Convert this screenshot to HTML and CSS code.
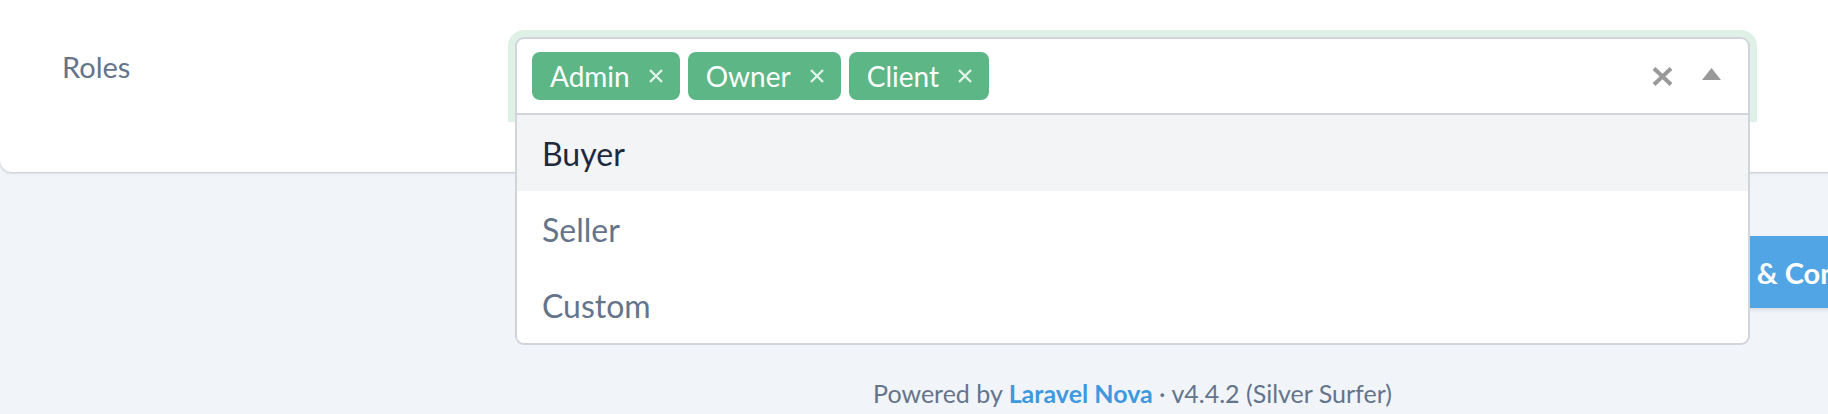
FILE: index.html
```html
<!DOCTYPE html>
<html lang="en">
<head>
<meta charset="utf-8">
<title>Roles</title>
<link rel="stylesheet" href="styles.css">
</head>
<body>
<div class="page">
  <div class="card">
    <div class="field-row">
      <div class="label-col"><span class="label">Roles</span></div>
      <div class="field-col">
        <div class="select">
          <div class="select-box">
            <div class="tags">
              <span class="tag">Admin<svg class="tag-x" viewBox="0 0 16 14"><path d="M2 1 L14 13 M14 1 L2 13"/></svg></span>
              <span class="tag">Owner<svg class="tag-x" viewBox="0 0 16 14"><path d="M2 1 L14 13 M14 1 L2 13"/></svg></span>
              <span class="tag">Client<svg class="tag-x" viewBox="0 0 16 14"><path d="M2 1 L14 13 M14 1 L2 13"/></svg></span>
            </div>
            <div class="controls">
              <svg class="clear" viewBox="0 0 21 19"><path d="M2 1.5 L19 17.5 M19 1.5 L2 17.5"/></svg>
              <svg class="caret" viewBox="0 0 19 12"><path d="M9.5 0 L19 12 L0 12 Z"/></svg>
            </div>
          </div>
          <ul class="menu">
            <li class="option is-active">Buyer</li>
            <li class="option">Seller</li>
            <li class="option">Custom</li>
          </ul>
        </div>
      </div>
    </div>
  </div>
  <div class="actions">
    <button class="btn" type="button">Update &amp; Continue Editing</button>
  </div>
  <footer class="footer">Powered by <a class="footer-link">Laravel Nova</a> · v4.4.2 (Silver Surfer)</footer>
</div>
</body>
</html>
```
FILE: styles.css
```css
html, body {
  margin: 0;
  padding: 0;
}
body {
  background: #f1f5f9;
  overflow: hidden;
  font-family: Lato, "Noto Sans", sans-serif;
  color: #64748b;
}
.page {
  width: 2265px;
}
.card {
  background: #ffffff;
  border-radius: 0 0 12px 12px;
  box-shadow: 0 1px 3px rgba(15, 23, 42, 0.14), 0 1px 2px rgba(15, 23, 42, 0.08);
  height: 172px;
  box-sizing: border-box;
  padding-top: 37px;
}
.field-row {
  display: flex;
}
.label-col {
  width: 453px;
  box-sizing: border-box;
  padding-left: 62px;
  padding-top: 13px;
  flex: none;
}
.label {
  font-size: 29px;
  line-height: 34px;
  color: #64748b;
}
.field-col {
  width: 1359px;
  box-sizing: border-box;
  padding: 0 62px;
  flex: none;
}
.select {
  position: relative;
}
.select-box {
  display: flex;
  align-items: center;
  justify-content: space-between;
  height: 78px;
  box-sizing: border-box;
  border: 2px solid #d1d5db;
  border-radius: 9px 9px 0 0;
  box-shadow: 0 0 0 7px #dff1e6;
  padding: 0 27px 0 15px;
  background: #fff;
}
.tags {
  display: flex;
  gap: 8px;
}
.tag {
  display: inline-flex;
  align-items: center;
  gap: 18px;
  height: 48px;
  padding: 0 16px 0 18px;
  background: #5db685;
  color: #ffffff;
  border-radius: 8px;
  font-size: 28px;
}
.tag-x {
  width: 16px;
  height: 14px;
  fill: none;
  stroke: rgba(255, 255, 255, 0.82);
  stroke-width: 2.4;
}
.controls {
  display: flex;
  align-items: center;
  gap: 29px;
}
.clear {
  width: 21px;
  height: 19px;
  fill: none;
  stroke: #999999;
  stroke-width: 4;
}
.caret {
  width: 19px;
  height: 12px;
  fill: #999999;
  margin-top: -4px;
}
.menu {
  position: absolute;
  top: 100%;
  left: 0;
  right: 0;
  margin: 0;
  padding: 0;
  list-style: none;
  background: #ffffff;
  border: 2px solid #d1d5db;
  border-top: 0;
  border-radius: 0 0 9px 9px;
  z-index: 10;
  overflow: hidden;
}
.option {
  height: 76px;
  display: flex;
  align-items: center;
  padding-left: 25px;
  font-size: 32px;
  color: #64748b;
}
.option.is-active {
  background: #f3f4f6;
  color: #1e293b;
}
.actions {
  display: flex;
  margin-top: 64px;
  padding-left: 1631px;
}
.btn {
  height: 72px;
  padding: 0 24px;
  border: 0;
  border-radius: 8px;
  background: #52a5e4;
  color: #ffffff;
  font-family: Lato, "Noto Sans", sans-serif;
  font-weight: 700;
  font-size: 29px;
  white-space: nowrap;
  box-shadow: 0 2px 4px rgba(15, 23, 42, 0.12);
}
.footer {
  margin-top: 70px;
  text-align: center;
  font-size: 25px;
  line-height: 30px;
  color: #64748b;
}
.footer-link {
  color: #4099de;
  font-weight: 700;
}
```
